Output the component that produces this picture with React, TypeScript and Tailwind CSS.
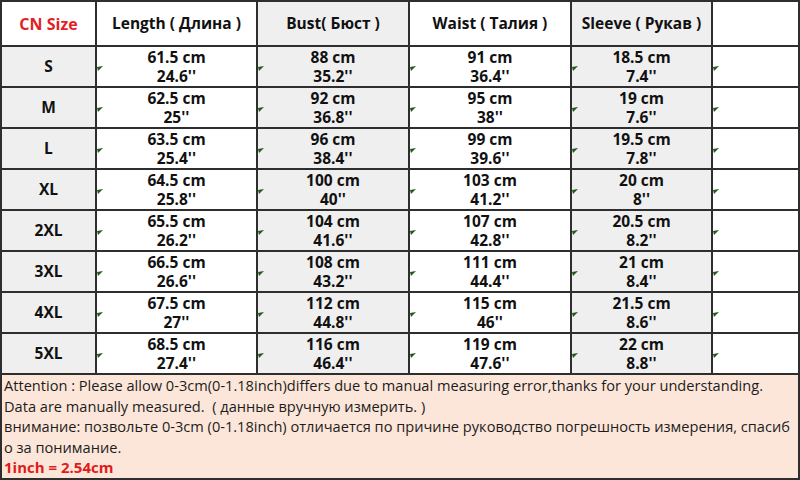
import React from "react";

const headers = ["Length ( Длина )", "Bust( Бюст )", "Waist ( Талия )", "Sleeve ( Рукав )", ""];

const rows: [string, string[]][] = [
  ["S", ["61.5 cm|24.6''", "88 cm|35.2''", "91 cm|36.4''", "18.5 cm|7.4''"]],
  ["M", ["62.5 cm|25''", "92 cm|36.8''", "95 cm|38''", "19 cm|7.6''"]],
  ["L", ["63.5 cm|25.4''", "96 cm|38.4''", "99 cm|39.6''", "19.5 cm|7.8''"]],
  ["XL", ["64.5 cm|25.8''", "100 cm|40''", "103 cm|41.2''", "20 cm|8''"]],
  ["2XL", ["65.5 cm|26.2''", "104 cm|41.6''", "107 cm|42.8''", "20.5 cm|8.2''"]],
  ["3XL", ["66.5 cm|26.6''", "108 cm|43.2''", "111 cm|44.4''", "21 cm|8.4''"]],
  ["4XL", ["67.5 cm|27''", "112 cm|44.8''", "115 cm|46''", "21.5 cm|8.6''"]],
  ["5XL", ["68.5 cm|27.4''", "116 cm|46.4''", "119 cm|47.6''", "22 cm|8.8''"]],
];

const colBg = ["bg-white", "bg-[#efefef]", "bg-white", "bg-[#efefef]", "bg-white"];

function Mark() {
  return (
    <svg className="absolute left-0 top-[19px]" width="6" height="5" viewBox="0 0 6 5">
      <polygon points="0,1 6,0 1,5" fill="#1d5c1d" />
    </svg>
  );
}

export default function App() {
  return (
    <div
      className="w-[800px] h-[480px] bg-[#2e2e2e] p-[2px] flex flex-col gap-[2px] overflow-hidden"
      style={{ fontFamily: '"Open Sans", "Noto Sans", sans-serif' }}
    >
      <div className="grid grid-cols-[93px_159px_150px_160px_139px_85px] grid-rows-[43px_repeat(8,39px)] gap-[2px]">
        <div className="bg-white flex items-center justify-center text-[16px] font-bold text-[#e31e24]">CN Size</div>
        {headers.map((h, i) => (
          <div key={i} className={`${colBg[i]} flex items-center justify-center text-[15.5px] font-bold text-[#111]`}>
            {h}
          </div>
        ))}
        {rows.map(([size, vals]) => (
          <React.Fragment key={size}>
            <div className="bg-[#efefef] flex items-center justify-center text-[15.5px] font-bold text-[#111]">{size}</div>
            {[...vals, ""].map((v, i) => {
              const [a, b] = v.split("|");
              return (
                <div
                  key={i}
                  className={`${colBg[i]} relative flex flex-col items-center justify-center text-[15.5px] font-bold text-[#111] leading-[18.5px]`}
                >
                  <Mark />
                  {v && (
                    <>
                      <span className="block h-[18.5px]">{a}</span>
                      <span className="block h-[18.5px]">{b}</span>
                    </>
                  )}
                </div>
              );
            })}
          </React.Fragment>
        ))}
      </div>
      <div className="flex-1 bg-[#fce6d9] px-[2px] text-[14.6px] leading-[20.5px] text-[#1c1c1c] whitespace-nowrap">
        <div>Attention : Please allow 0-3cm(0-1.18inch)differs due to manual measuring error,thanks for your understanding.</div>
        <div>Data are manually measured.&nbsp; ( данные вручную измерить. )</div>
        <div>внимание: позвольте 0-3cm (0-1.18inch) отличается по причине руководство погрешность измерения, спасиб</div>
        <div>о за понимание.</div>
        <div className="font-bold text-[15px] text-[#e01b1b]">1inch = 2.54cm</div>
      </div>
    </div>
  );
}
